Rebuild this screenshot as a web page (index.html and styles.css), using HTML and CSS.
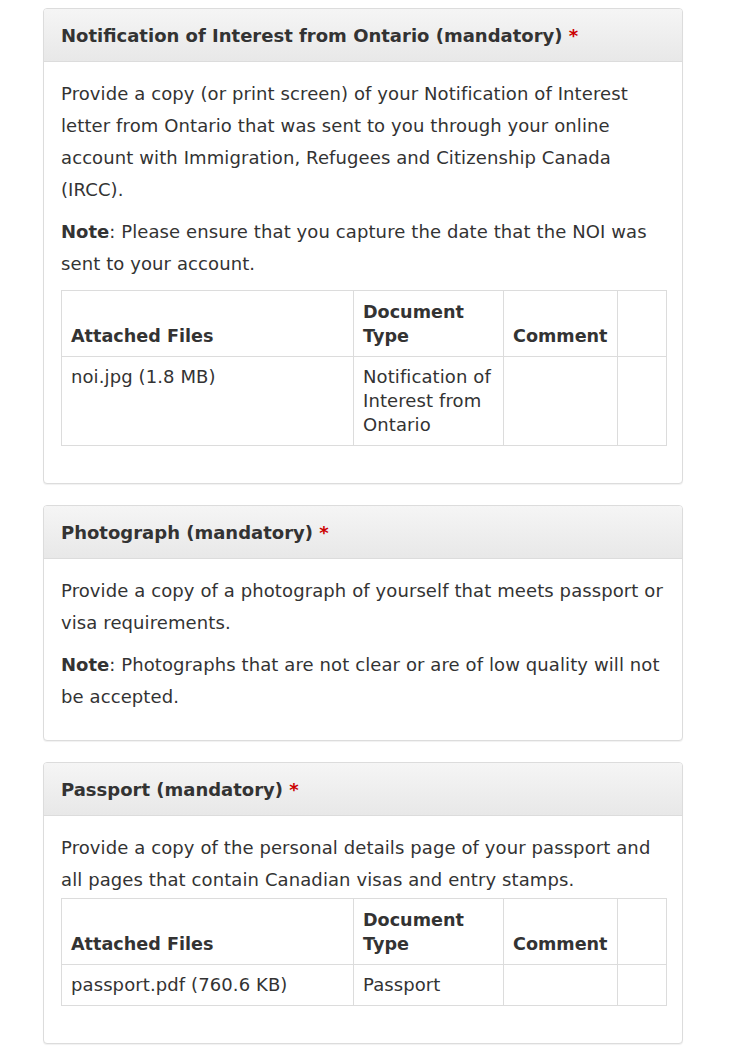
FILE: index.html
```html
<!DOCTYPE html>
<html>
<head>
<meta charset="utf-8">
<link rel="stylesheet" href="styles.css">
</head>
<body>
<div class="wrap">
  <section class="panel">
    <div class="panel-heading">Notification of Interest from Ontario (mandatory) <span class="req">*</span></div>
    <div class="panel-body">
      <p>Provide a copy (or print screen) of your Notification of Interest letter from Ontario that was sent to you through your online account with Immigration, Refugees and Citizenship Canada (IRCC).</p>
      <p><strong>Note</strong>: Please ensure that you capture the date that the NOI was sent to your account.</p>
      <table class="files">
        <colgroup><col class="c1"><col class="c2"><col class="c3"><col class="c4"></colgroup>
        <thead>
          <tr><th>Attached Files</th><th>Document Type</th><th>Comment</th><th></th></tr>
        </thead>
        <tbody>
          <tr><td>noi.jpg (1.8 MB)</td><td>Notification of Interest from Ontario</td><td></td><td></td></tr>
        </tbody>
      </table>
    </div>
  </section>

  <section class="panel">
    <div class="panel-heading">Photograph (mandatory) <span class="req">*</span></div>
    <div class="panel-body">
      <p>Provide a copy of a photograph of yourself that meets passport or visa requirements.</p>
      <p><strong>Note</strong>: Photographs that are not clear or are of low quality will not be accepted.</p>
    </div>
  </section>

  <section class="panel">
    <div class="panel-heading">Passport (mandatory) <span class="req">*</span></div>
    <div class="panel-body">
      <div class="desc">Provide a copy of the personal details page of your passport and all pages that contain Canadian visas and entry stamps.</div>
      <table class="files">
        <colgroup><col class="c1"><col class="c2"><col class="c3"><col class="c4"></colgroup>
        <thead>
          <tr><th>Attached Files</th><th>Document Type</th><th>Comment</th><th></th></tr>
        </thead>
        <tbody>
          <tr><td>passport.pdf (760.6 KB)</td><td>Passport</td><td></td><td></td></tr>
        </tbody>
      </table>
    </div>
  </section>
</div>
</body>
</html>
```

FILE: styles.css
```css
html, body {
  margin: 0;
  padding: 0;
  background: #fff;
}
body {
  font-family: "DejaVu Sans", Verdana, sans-serif;
  font-size: 18px;
  letter-spacing: 0.1px;
  color: #333;
}
.wrap {
  width: 640px;
  margin-left: 43px;
  padding-top: 8px;
}
.panel {
  border: 1px solid #dcdcdc;
  border-radius: 4px;
  box-shadow: 0 1px 1px rgba(0, 0, 0, 0.06);
  margin-bottom: 21px;
  background: #fff;
}
.panel-heading {
  background: linear-gradient(#f5f5f5, #e8e8e8);
  border-bottom: 1px solid #dcdcdc;
  border-radius: 3px 3px 0 0;
  padding: 16px 17px 14px;
  font-weight: bold;
  font-size: 18px;
  letter-spacing: 0;
  line-height: 22px;
  color: #333;
}
.req {
  color: #c00;
}
.panel-body {
  padding: 16px 17px 17px;
}
.panel-body p {
  margin: 0 0 10px;
  line-height: 32px;
}
.panel-body strong {
  letter-spacing: 0;
}
.panel-body .desc {
  line-height: 32px;
  margin-bottom: 2px;
}
.panel-body p + .files {
  margin-top: 1px;
}
.files {
  width: 100%;
  table-layout: fixed;
  border-collapse: collapse;
  border: 1px solid #dcdcdc;
  margin-bottom: 20px;
  line-height: 24px;
}
.files th, .files td {
  border: 1px solid #dcdcdc;
  padding: 8px 9px;
  text-align: left;
}
.files th {
  vertical-align: bottom;
  font-weight: bold;
  font-size: 17.6px;
  letter-spacing: 0;
  padding-top: 9px;
}
.files td {
  vertical-align: top;
}
.c1 { width: 292px; }
.c2 { width: 150px; }
.c3 { width: 114px; }
.c4 { width: 49px; }
```
